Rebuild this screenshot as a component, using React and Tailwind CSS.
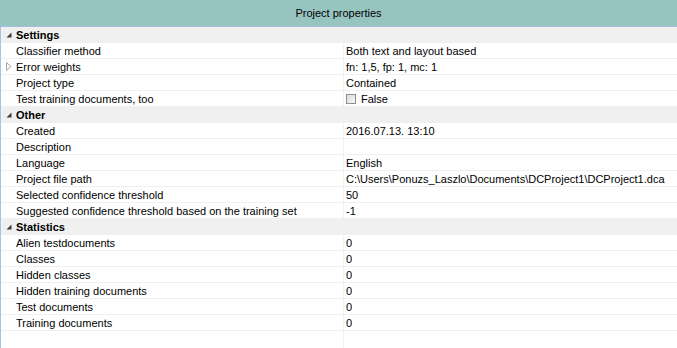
const sections = [
  {
    title: 'Settings',
    rows: [
      { name: 'Classifier method', value: 'Both text and layout based' },
      { name: 'Error weights', value: 'fn: 1,5, fp: 1, mc: 1', expandable: true },
      { name: 'Project type', value: 'Contained' },
      { name: 'Test training documents, too', value: 'False', checkbox: true },
    ],
  },
  {
    title: 'Other',
    rows: [
      { name: 'Created', value: '2016.07.13. 13:10' },
      { name: 'Description', value: '' },
      { name: 'Language', value: 'English' },
      { name: 'Project file path', value: 'C:\\Users\\Ponuzs_Laszlo\\Documents\\DCProject1\\DCProject1.dca' },
      { name: 'Selected confidence threshold', value: '50' },
      { name: 'Suggested confidence threshold based on the training set', value: '-1' },
    ],
  },
  {
    title: 'Statistics',
    rows: [
      { name: 'Alien testdocuments', value: '0' },
      { name: 'Classes', value: '0' },
      { name: 'Hidden classes', value: '0' },
      { name: 'Hidden training documents', value: '0' },
      { name: 'Test documents', value: '0' },
      { name: 'Training documents', value: '0' },
    ],
  },
];

const Expanded = () => (
  <svg width="6" height="6" viewBox="0 0 6 6">
    <polygon points="5.5,0.5 5.5,5.5 0.5,5.5" fill="#3c3c3c" />
  </svg>
);

const Collapsed = () => (
  <svg width="6" height="9" viewBox="0 0 6 9">
    <polygon points="0.5,0.5 5,4.5 0.5,8.5" fill="white" stroke="#a6a6a6" strokeWidth="1" />
  </svg>
);

const PropRow = ({ row }) => (
  <div className="flex h-[16px] border-b border-[#f0f0f0]">
    <div className="w-[15px] flex items-center justify-center pl-[1px]">
      {row.expandable && <Collapsed />}
    </div>
    <div className="w-[327px] pt-[1px] leading-[15px] whitespace-nowrap overflow-hidden">{row.name}</div>
    <div className="w-px bg-[#f0f0f0]" />
    <div className="flex-1 pl-[2px] pt-[1px] leading-[15px] whitespace-nowrap flex items-center">
      {row.checkbox && (
        <span className="inline-block w-[10px] h-[10px] border border-[#8e8f8f] bg-gradient-to-br from-[#dcdcdc] to-[#f8f8f8] mr-[5px]" />
      )}
      <span>{row.value}</span>
    </div>
  </div>
);

export default function App() {
  return (
    <div
      className="w-[677px] h-[348px] bg-white text-[11px] text-black overflow-hidden flex flex-col"
      style={{ fontFamily: '"Liberation Sans", Arial, sans-serif' }}
    >
      <div className="h-[27px] bg-[#97c4bf] border-b border-[#a7bfdc] flex items-center justify-center">
        Project properties
      </div>
      <div className="flex-1 border-l border-[#a9c2e2] flex flex-col">
        {sections.map(sec => (
          <div key={sec.title}>
            <div className="flex h-[16px] bg-[#f0f0f0] items-center">
              <div className="w-[15px] flex items-center justify-center pb-[1px]">
                <Expanded />
              </div>
              <div className="pt-[1px] font-bold leading-[15px]">{sec.title}</div>
            </div>
            {sec.rows.map(r => <PropRow key={r.name} row={r} />)}
          </div>
        ))}
        <div className="flex flex-1">
          <div className="w-[342px]" />
          <div className="w-px bg-[#f0f0f0]" />
        </div>
      </div>
    </div>
  );
}
